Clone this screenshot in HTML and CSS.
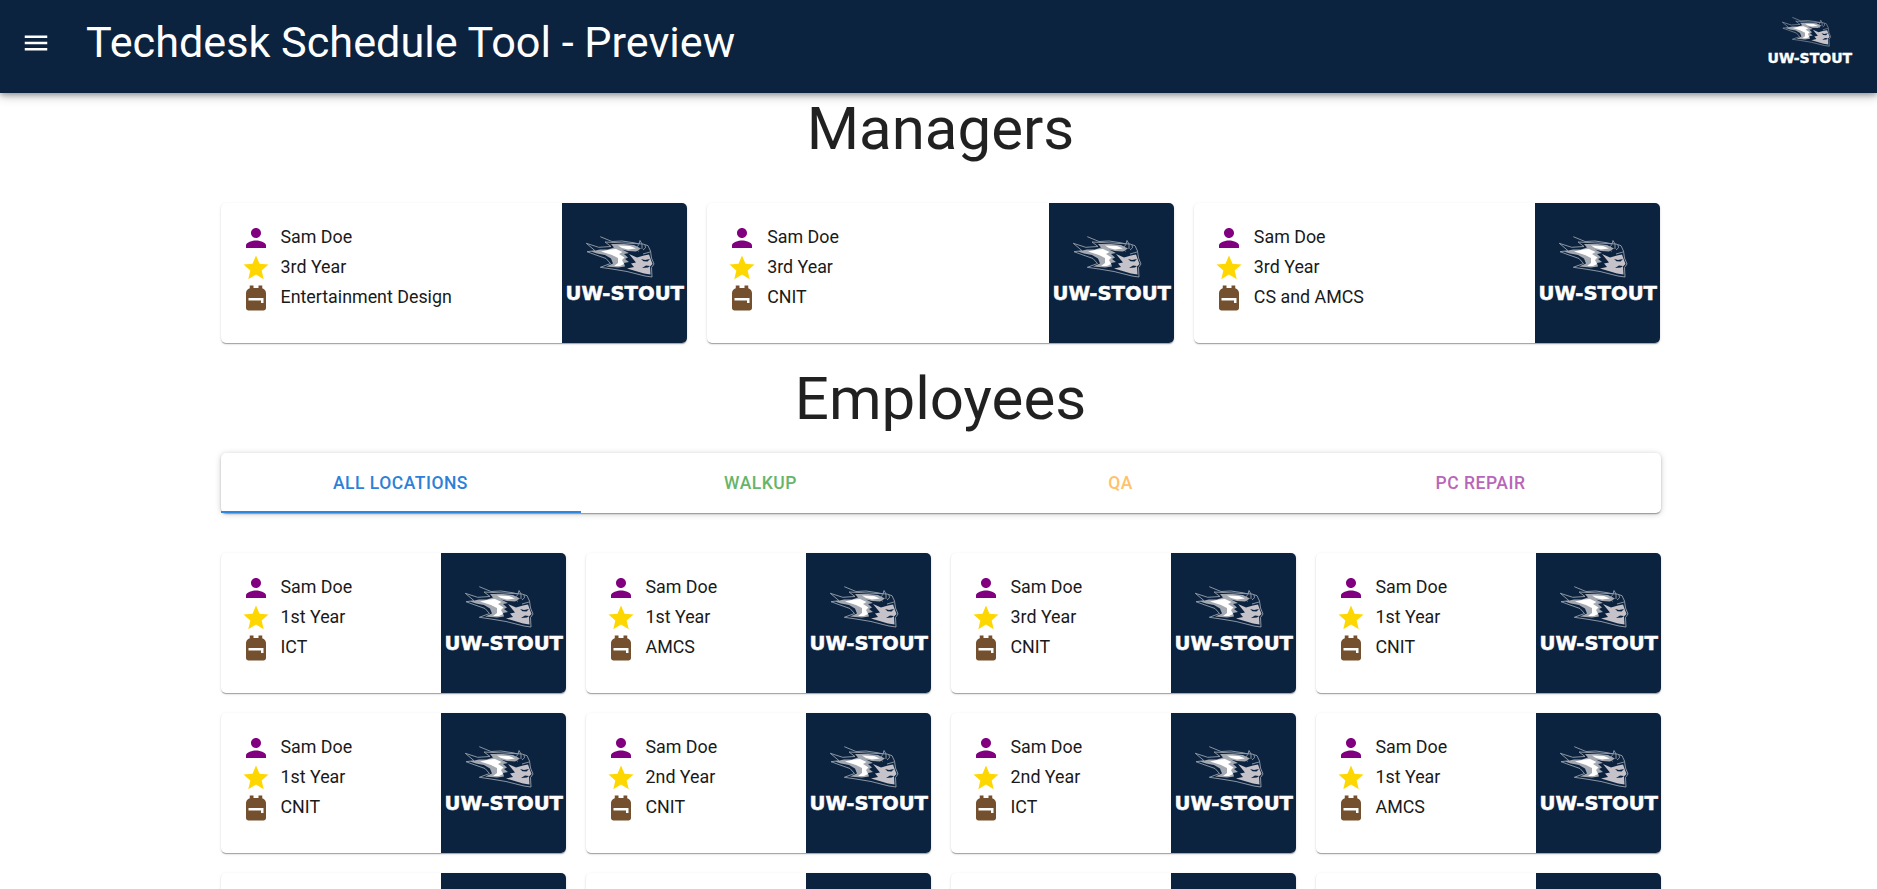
FILE: index.html
```
<!DOCTYPE html>
<html lang="en">
<head>
<meta charset="utf-8">
<title>Techdesk Schedule Tool</title>
<link rel="stylesheet" href="styles.css">
</head>
<body>
<svg width="0" height="0" class="defs">
  <symbol id="person" viewBox="0 0 24 24"><path d="M12 12c2.210 0 4-1.790 4-4s-1.790-4-4-4-4 1.790-4 4 1.790 4 4 4zm0 2c-2.670 0-8 1.340-8 4v2h16v-2c0-2.660-5.330-4-8-4z"/></symbol>
  <symbol id="star" viewBox="0 0 24 24"><path d="M12 17.270 18.180 21l-1.640-7.030L22 9.240l-7.190-.61L12 2 9.190 8.630 2 9.240l5.460 4.730L5.820 21z"/></symbol>
  <symbol id="pack" viewBox="0 0 24 24"><path d="M20 8v12c0 1.100-.9 2-2 2H6c-1.100 0-2-.9-2-2V8c0-1.860 1.280-3.410 3-3.860V2h3v2h4V2h3v2.140c1.720.45 3 2 3 3.860zM6 12v2h10v2h2v-4H6z"/></symbol>
  <symbol id="logo" viewBox="0 0 125 140">
    <path d="M38.300 33.700 50 38.500 60 38 72 39.800 77 41 78 37.500 80 41 80 46M81 41 86 42.700 88.500 48 89.500 55 92 61 89.500 64.500 90 74 83 73 65 68.500 50 66 38.300 64.300 48.500 60.500 44 55.500 34 52 25 48.700 33 47.700 24.300 40.300 36.700 44.300 49 43.500 43 39Z" fill="#0c2340" stroke="#98a1ad" stroke-width=".9" stroke-linejoin="round"/>
    <path d="M29 48.500 38 46.500 46 46.500 52 44.500 49 41 62 41 72 42 79 45.500 74 48.500 66 48 60 46.500 67 50 62 51 66 54.500 63 56 67 59 62 60 63 63.500 56 64.500 44 63.500 51 60.500 49 55.500 43 52 35 50.500Z" fill="#a5aab2"/>
    <path d="M39 48.500 48 46.500 54 46 60.500 49 57 51 62.500 54.500 60 57 62 61 58 63 52 63 56 60 56 55 50 52ZM56 42.500 68 43 74 45.500 66 46.500 60 45Z" fill="#fff"/>
    <path d="M67 51 75 54.500 82 52.500 87 51.500 89 57 90.500 61 88 63.500 88.500 71.500 82 70.500 65 65.500 72 64 69 60.500 74 59.500Z" fill="#c5c3c9"/>
    <path d="m79 56 4 1 5-1-2.500 2.500-4-.3zM80 65l4-2.500 4 .5-2 1.500z" fill="#0c2340"/>
    <path d="M76.500 48.500Q73 45 77 41.500M81 47q4-2 2-5M88 49l-7 2" fill="none" stroke="#a3abb5" stroke-width=".8"/>
    <text x="3.500" y="97" class="mark" textLength="118.500" lengthAdjust="spacingAndGlyphs">UW-STOUT</text>
  </symbol>
</svg>
<header class="bar">
  <svg class="menu" viewBox="0 0 24 24"><path d="M3 18h18v-2H3v2zm0-5h18v-2H3v2zm0-7v2h18V6H3z"/></svg>
  <span class="title">Techdesk Schedule Tool - Preview</span>
  <svg class="brand" viewBox="0 29 125 74"><use href="#logo" width="125" height="140"/></svg>
</header>
<main class="page">
  <h1 class="heading">Managers</h1>
  <section class="grid managers" id="managers"></section>
  <h1 class="heading employees-heading">Employees</h1>
  <nav class="tabs">
    <a class="tab all">All Locations</a>
    <a class="tab walkup">Walkup</a>
    <a class="tab qa">QA</a>
    <a class="tab repair">PC Repair</a>
  </nav>
  <section class="grid staff" id="staff"></section>
</main>
<script src="app.js"></script>
</body>
</html>
```
FILE: styles.css
```
* { box-sizing: border-box; }
body { margin: 0; height: 889px; overflow: hidden; background: #fff; color: rgba(0,0,0,.87); font-family: Roboto, sans-serif; }
.defs { position: absolute; }
.bar { height: 93px; padding: 0 24px 0 21px; display: flex; align-items: flex-start; background: #0c2340; color: #fff; box-shadow: 0 2px 5px rgba(0,0,0,.25), 0 3px 10px rgba(0,0,0,.25); position: relative; }
.menu { width: 30px; height: 30px; margin: 28px 35px 0 0; fill: #fff; }
.title { font-size: 43.200px; line-height: 86px; flex: 1; }
.brand { width: 89.300px; height: 53px; margin: 14px -1px 0 0; }
.mark { font: 700 18.800px "DejaVu Sans", sans-serif; fill: #fff; stroke: #fff; stroke-width: .5px; }
.page { width: 1440px; margin: 0 0 0 220.500px; }
.heading { margin: 0; font-size: 60px; line-height: 72px; font-weight: 400; text-align: center; }
.grid { display: grid; gap: 20px; }
.managers { grid-template-columns: repeat(3, 1fr); margin-top: 38px; }
.staff { grid-template-columns: repeat(4, 1fr); margin-top: 40px; }
.employees-heading { margin-top: 20px; }
.card { height: 140px; display: flex; border-radius: 5px; overflow: hidden; background: #fff; box-shadow: 0 2px 1px -1px rgba(0,0,0,.2), 0 1px 1px rgba(0,0,0,.14), 0 1px 3px rgba(0,0,0,.12); }
.info { flex: 1; padding: 20px; }
.row { display: flex; height: 30px; line-height: 27px; font-size: 17.850px; color: #1a1a1a; }
.icon { width: 30px; height: 30px; margin-right: 10px; }
.person { fill: purple; }
.star { fill: gold; }
.pack { fill: #75502f; }
.photo { width: 125px; height: 140px; background: #0c2340; }
.tabs { display: flex; height: 60px; margin-top: 18px; border-radius: 5px; box-shadow: 0 2px 1px -1px rgba(0,0,0,.2), 0 1px 2px rgba(0,0,0,.2), 0 1px 6px rgba(0,0,0,.2); }
.tab { flex: 1; line-height: 60px; text-align: center; text-transform: uppercase; font-size: 17.500px; font-weight: 500; letter-spacing: .5px; }
.all { color: #2e7fd8; border-bottom: 2px solid #2e86de; }
.walkup { color: #66b569; }
.qa { color: #ffc267; }
.repair { color: #b866b8; }
```
FILE: app.js
```
const icon = name => `<svg class="icon ${name}"><use href="#${name}"/></svg>`;
const card = ([year, major]) => `<article class="card"><div class="info">
<div class="row">${icon('person')}Sam Doe</div>
<div class="row">${icon('star')}${year} Year</div>
<div class="row">${icon('pack')}${major}</div>
</div><svg class="photo"><use href="#logo"/></svg></article>`;
const fill = (id, people) => { document.getElementById(id).innerHTML = people.map(card).join(''); };
fill('managers', [['3rd', 'Entertainment Design'], ['3rd', 'CNIT'], ['3rd', 'CS and AMCS']]);
fill('staff', [
  ['1st', 'ICT'], ['1st', 'AMCS'], ['3rd', 'CNIT'], ['1st', 'CNIT'],
  ['1st', 'CNIT'], ['2nd', 'CNIT'], ['2nd', 'ICT'], ['1st', 'AMCS'],
  ['1st', 'CNIT'], ['1st', 'ICT'], ['2nd', 'CNIT'], ['1st', 'AMCS']
]);
```
